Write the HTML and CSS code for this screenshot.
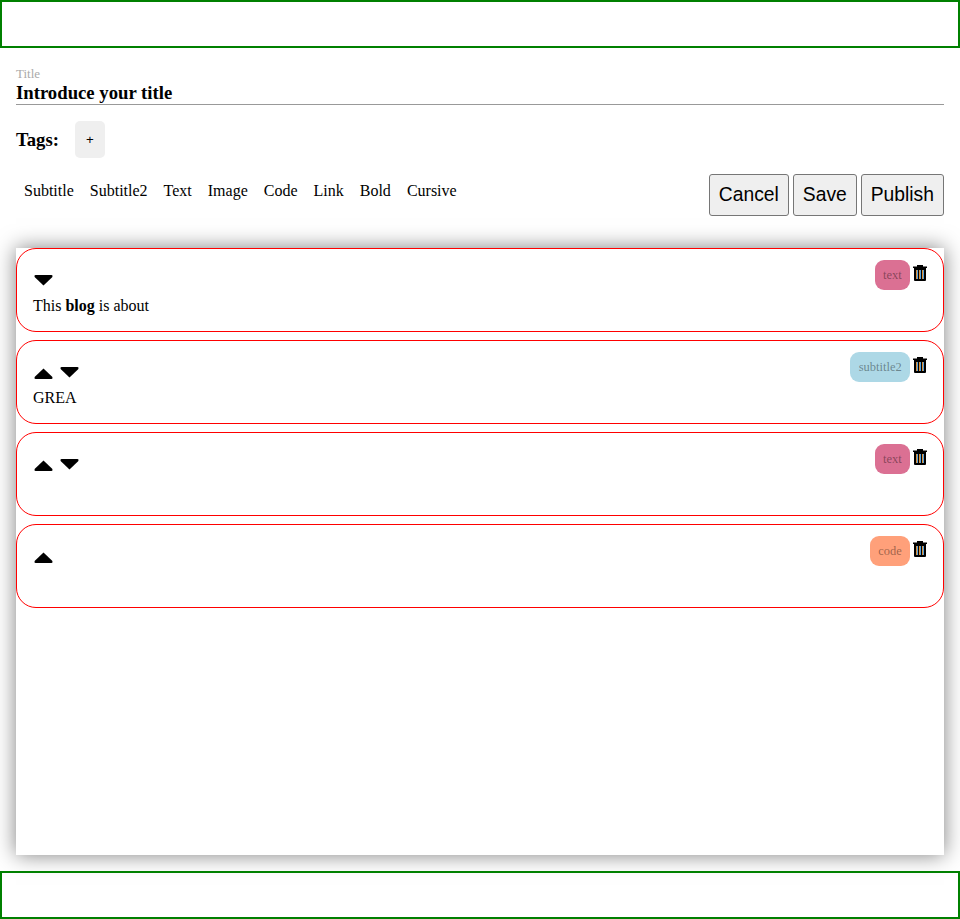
FILE: index.html
```html
<!DOCTYPE html>
<html>
    <head>
        <title>new post</title>
        <link rel="stylesheet" href="styles.css">
    </head>
    <body>
        <svg class='defs' width='0' height='0'>
            <symbol id='up' viewBox='0 0 19 11'>
                <path d='M9.5 0.5 L18.4 9 Q19 10.8 17.5 11 L1.5 11 Q0 10.8 0.6 9 Z'/>
            </symbol>
            <symbol id='down' viewBox='0 0 19 11'>
                <path d='M9.5 10.5 L18.4 2 Q19 0.2 17.5 0 L1.5 0 Q0 0.2 0.6 2 Z'/>
            </symbol>
            <symbol id='trash' viewBox='0 0 14 16'>
                <path d='M0 1.5 H4 V0 H10 V1.5 H14 V3 H0 Z'/>
                <path d='M1 3 H13 V15 Q13 16 12 16 H2 Q1 16 1 15 Z'/>
                <path class='slit-a' d='M3 5 H4 V14 H3 Z M6 5 H7 V14 H6 Z M9 5 H10 V14 H9 Z'/>
                <path class='slit-b' d='M4 5 H5 V14 H4 Z M7 5 H8 V14 H7 Z M10 5 H11 V14 H10 Z'/>
            </symbol>
        </svg>

        <header class='bar'></header>

        <main>
            <label class='title-label'>Title</label>
            <div class='title'>Introduce your title</div>

            <div class='tags'>
                <strong>Tags:</strong>
                <button class='add-tag'>+</button>
            </div>

            <div class='toolbar'>
                <nav class='inserts'>
                    <a>Subtitle</a>
                    <a>Subtitle2</a>
                    <a>Text</a>
                    <a>Image</a>
                    <a>Code</a>
                    <a>Link</a>
                    <a>Bold</a>
                    <a>Cursive</a>
                </nav>
                <div class='actions'>
                    <button>Cancel</button>
                    <button>Save</button>
                    <button>Publish</button>
                </div>
            </div>

            <section class='editor'>
                <div class='block'>
                    <div class='block-head'>
                        <div class='arrows'>
                            <svg class='down'><use href='#down'/></svg>
                        </div>
                        <span class='kind text'>text</span>
                        <svg class='trash'><use href='#trash'/></svg>
                    </div>
                    <p>This <b>blog</b> is about</p>
                </div>
                <div class='block'>
                    <div class='block-head'>
                        <div class='arrows'>
                            <svg class='up'><use href='#up'/></svg>
                            <svg class='down'><use href='#down'/></svg>
                        </div>
                        <span class='kind subtitle2'>subtitle2</span>
                        <svg class='trash'><use href='#trash'/></svg>
                    </div>
                    <p>GREA</p>
                </div>
                <div class='block'>
                    <div class='block-head'>
                        <div class='arrows'>
                            <svg class='up'><use href='#up'/></svg>
                            <svg class='down'><use href='#down'/></svg>
                        </div>
                        <span class='kind text'>text</span>
                        <svg class='trash'><use href='#trash'/></svg>
                    </div>
                    <p></p>
                </div>
                <div class='block'>
                    <div class='block-head'>
                        <div class='arrows'>
                            <svg class='up'><use href='#up'/></svg>
                        </div>
                        <span class='kind code'>code</span>
                        <svg class='trash'><use href='#trash'/></svg>
                    </div>
                    <p></p>
                </div>
            </section>
        </main>

        <footer class='bar'></footer>
    </body>
</html>
```

FILE: styles.css
```css
* {
    box-sizing:border-box;
}
body {
    margin:0;
    background:#fff;
    color:#000;
    font:16px/18px 'Liberation Serif', serif;
}
.defs {
    display:block;
    height:0;
}
.bar {
    height:48px;
    border:2px solid green;
}
main {
    padding:19px 16px 16px;
}
.title-label {
    display:block;
    font-size:13px;
    line-height:13px;
    color:#aaa;
}
.title {
    height:25px;
    border-bottom:1px solid #999;
    font-size:18.72px;
    font-weight:bold;
    line-height:26px;
}
.tags {
    display:flex;
    align-items:center;
    gap:16px;
    margin-top:16px;
    font-size:18.72px;
}
.add-tag {
    width:30px;
    height:37px;
    padding:0;
    border:none;
    border-radius:5px;
    background:#efefef;
    font:13.33px 'Liberation Sans', sans-serif;
}
.toolbar {
    display:flex;
    justify-content:space-between;
    margin-top:16px;
}
.inserts {
    display:flex;
    gap:16px;
    padding:8px;
}
.actions {
    display:flex;
    gap:4px;
}
.actions button {
    height:42px;
    padding:0 9px;
    border:1px solid #767676;
    border-radius:3px;
    background:#efefef;
    font:19.3px 'Liberation Sans', sans-serif;
}
.editor {
    display:flex;
    flex-direction:column;
    gap:8px;
    height:607px;
    margin-top:32px;
    box-shadow:0 0 20px rgba(0,0,0,0.5);
}
.block {
    height:84px;
    padding:11px 16px;
    border:1px solid red;
    border-radius:20px;
}
.block p {
    margin:7px 0 0;
    height:18px;
}
.block-head {
    display:flex;
    height:30px;
}
.arrows {
    display:flex;
    align-items:flex-start;
    gap:7px;
    flex:1;
    padding-left:1px;
}
.arrows svg {
    width:19px;
    height:11px;
}
.arrows .up {
    margin-top:16px;
}
.arrows .down {
    margin-top:15px;
}
.kind {
    height:30px;
    padding:0 8.25px;
    border-radius:9px;
    color:rgba(0,0,0,0.4);
    font-size:12.5px;
    line-height:31px;
}
.kind.text {
    background:#db7093;
}
.kind.subtitle2 {
    background:#add8e6;
}
.kind.code {
    background:#ffa07a;
}
.trash {
    width:14px;
    height:16px;
    margin:5px 0 0 3px;
}
.slit-a {
    fill:#d9913c;
}
.slit-b {
    fill:#5aa0d8;
}
```
